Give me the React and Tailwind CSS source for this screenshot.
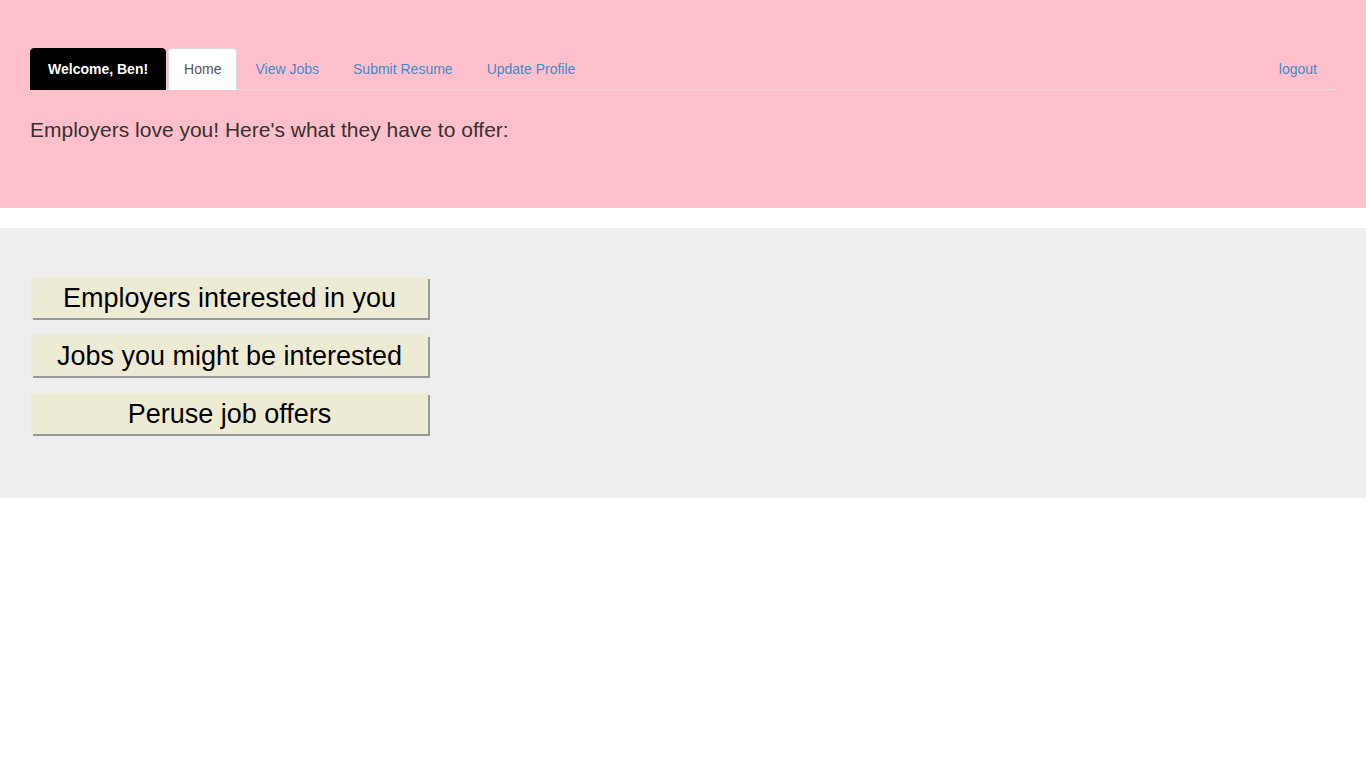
import React from "react";

const Header = () => {
  const links = ["View Jobs", "Submit Resume", "Update Profile"];

  return (
    <div className="bg-[#ffc0cb] h-[208px] px-[30px] pt-[48px]">
      <ul className="flex border-b border-[#ddd] text-[14px] leading-[20px]">
        <li className="mr-[2px] -mb-px">
          <span className="block bg-black text-white font-bold text-[14px] px-[17px] py-[10px] border border-black rounded-t-[4px]">
            Welcome, Ben!
          </span>
        </li>
        <li className="mr-[2px] -mb-px">
          <a className="block bg-white text-[#555] px-[15px] py-[10px] border border-[#ddd] border-b-transparent rounded-t-[4px]">
            Home
          </a>
        </li>
        {links.map((l) => (
          <li key={l} className="mr-[2px] -mb-px">
            <a className="block text-[#428bca] px-[15px] py-[10px] border border-transparent">
              {l}
            </a>
          </li>
        ))}
        <li className="ml-auto mr-[3px] -mb-px">
          <a className="block text-[#428bca] px-[15px] py-[10px] border border-transparent">
            logout
          </a>
        </li>
      </ul>
      <p className="mt-[28px] text-[21px] leading-[24px] text-[#333]">
        Employers love you! Here's what they have to offer:
      </p>
    </div>
  );
};

const OfferButton = ({ label }) => (
  <button className="block w-[397px] h-[41px] bg-[#eeebd5] text-black text-[27px] leading-[43px] shadow-[2px_2px_0_#999] text-center">
    {label}
  </button>
);

export default function App() {
  return (
    <div className="min-h-screen bg-white font-['Liberation_Sans',Arial,sans-serif]">
      <Header />
      <div className="mt-[20px] bg-[#eee] h-[270px] px-[31px] pt-[49px] flex flex-col gap-[17px]">
        <OfferButton label="Employers interested in you" />
        <OfferButton label="Jobs you might be interested" />
        <OfferButton label="Peruse job offers" />
      </div>
    </div>
  );
}
